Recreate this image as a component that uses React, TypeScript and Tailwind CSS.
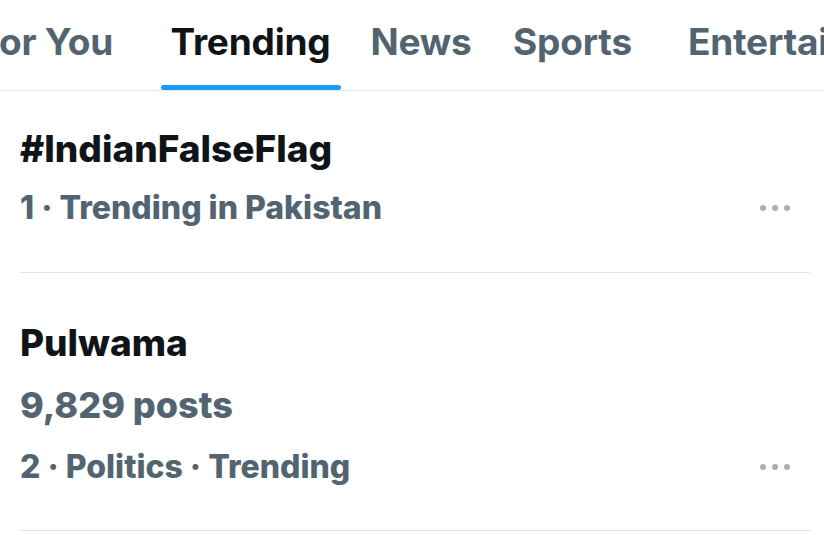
const tabs = [
  { label: "For You", box: "w-[150px] justify-end pr-[37px]" },
  { label: "Trending", box: "w-[201px] justify-center", active: true },
  { label: "News", box: "w-[140px] justify-center" },
  { label: "Sports", box: "w-[163px] justify-center" },
  { label: "Entertainment", box: "pl-[34px] justify-start" },
];

type Line = { text: string; cls: string };

const trends: { title: string; pad: string; lines: Line[] }[] = [
  {
    title: "#IndianFalseFlag",
    pad: "pt-[36px] pb-[44px]",
    lines: [{ text: "1 · Trending in Pakistan", cls: "mt-[17px] text-[32px] leading-[40px]" }],
  },
  {
    title: "Pulwama",
    pad: "pt-[48px] pb-[43px]",
    lines: [
      { text: "9,829 posts", cls: "mt-[18px] text-[36px] leading-[44px]" },
      { text: "2 · Politics · Trending", cls: "mt-[20px] text-[32px] leading-[40px]" },
    ],
  },
];

const MoreDots = () => (
  <div className="flex items-center gap-[6px] mr-[20px]">
    <span className="w-[6px] h-[6px] rounded-full bg-[#a3b0ba]" />
    <span className="w-[6px] h-[6px] rounded-full bg-[#a3b0ba]" />
    <span className="w-[6px] h-[6px] rounded-full bg-[#a3b0ba]" />
  </div>
);

export default function App() {
  return (
    <div className="w-[824px] h-[535px] overflow-hidden bg-white font-['Inter',sans-serif] antialiased">
      {/* Tab bar */}
      <div className="flex border-b border-[#e4e8ea] overflow-hidden">
        {tabs.map((tab) => (
          <div key={tab.label} className={`flex-none flex ${tab.box}`}>
            <div className="flex flex-col items-center pt-[20px] whitespace-nowrap">
              <span
                className={`text-[37px] leading-[44px] font-bold tracking-[-0.2px] ${
                  tab.active ? "text-[#0f1419]" : "text-[#536471]"
                }`}
              >
                {tab.label}
              </span>
              <div
                className={`mt-[21px] h-[5px] rounded-full ${
                  tab.active ? "w-[180px] bg-[#1d9bf0]" : "w-0"
                }`}
              />
            </div>
          </div>
        ))}
      </div>

      {/* Trend list */}
      <div className="pl-[20px] pr-[14px]">
        {trends.map((t) => (
          <div key={t.title} className={`border-b border-[#e1e5e8] ${t.pad}`}>
            <div className="text-[37px] leading-[44px] font-extrabold text-[#0f1419]">
              {t.title}
            </div>
            {t.lines.map((line, i) => (
              <div key={line.text} className={`flex items-center justify-between ${line.cls}`}>
                <span className="font-extrabold text-[#536471]">{line.text}</span>
                {i === t.lines.length - 1 && <MoreDots />}
              </div>
            ))}
          </div>
        ))}
      </div>
    </div>
  );
}
